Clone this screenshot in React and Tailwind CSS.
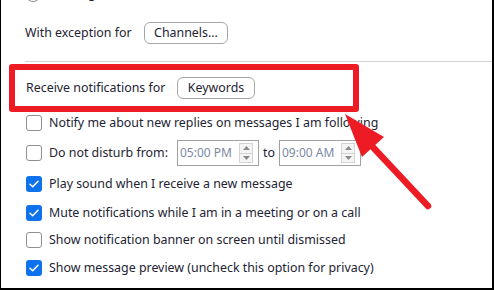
import React from 'react'

const rows = [
  { label: 'Notify me about new replies on messages I am following', checked: false, mt: 'mt-[3px]' },
  { label: 'Do not disturb from:', checked: false, mt: 'mt-[14px]', dnd: true },
  { label: 'Play sound when I receive a new message', checked: true, mt: 'mt-[15px]' },
  { label: 'Mute notifications while I am in a meeting or on a call', checked: true, mt: 'mt-[13px]' },
  { label: 'Show notification banner on screen until dismissed', checked: false, mt: 'mt-[11px]' },
  { label: 'Show message preview (uncheck this option for privacy)', checked: true, mt: 'mt-[12px]' },
]

function Checkbox({ checked }) {
  if (checked) {
    return (
      <span className="w-4 h-4 rounded-[3px] bg-[#0e72ed] flex items-center justify-center flex-shrink-0">
        <svg width="10" height="8" viewBox="0 0 10 8" fill="none">
          <path d="M1 4.2 3.7 6.8 9 1.2" stroke="#fff" strokeWidth="1.5" strokeLinecap="round" strokeLinejoin="round" />
        </svg>
      </span>
    )
  }
  return <span className="w-4 h-4 rounded-[3px] border border-[#8e8e93] bg-white flex-shrink-0" />
}

function TimeField({ value }) {
  return (
    <div className="h-[26px] border border-[#a0a0a0] bg-white flex items-center justify-between pl-[2px] pr-[5px]">
      <span className="text-[12px] text-[#7b8aa3]">{value}</span>
      {/* spinner */}
      <span className="w-[14px] h-[20px] border border-[#d4d4d4] bg-[#f4f4f4] flex flex-col">
        <span className="flex-1 flex items-center justify-center border-b border-[#d4d4d4]">
          <svg width="7" height="4" viewBox="0 0 7 4"><path d="M0 4 3.5 0 7 4z" fill="#8a8a8a" /></svg>
        </span>
        <span className="flex-1 flex items-center justify-center">
          <svg width="7" height="4" viewBox="0 0 7 4"><path d="M0 0 3.5 4 7 0z" fill="#8a8a8a" /></svg>
        </span>
      </span>
    </div>
  )
}

export default function App() {
  return (
    <div
      className="relative w-[494px] h-[290px] overflow-hidden bg-white border-l border-r-2 border-b-2 border-black text-[12.4px] text-[#232333]"
      style={{ fontFamily: '"Noto Sans", "Open Sans", sans-serif' }}
    >
      {/* clipped radio from above */}
      <div className="-mt-[14px] h-[16px] pl-[24px] flex items-center gap-[7px]">
        <span className="w-4 h-4 rounded-full border border-[#8e8e93]" />
        <span>Nothing</span>
      </div>

      {/* With exception for */}
      <div className="mt-[20px] h-[22px] pl-[24px] flex items-center">
        <span className="w-[119px]">With exception for</span>
        <button className="w-[84px] h-[22px] rounded-[6px] border border-[#a6a6a6] bg-white leading-none">
          Channels...
        </button>
      </div>

      <div className="mt-[17px] ml-[24px] h-px bg-[#d6d6d6]" />

      {/* highlighted row */}
      <div className="mt-[2px] ml-[8px] w-[350px] h-[48px] border-[6px] border-[#ed1c24] rounded-[3px] flex items-center pl-[11px]">
        <span className="w-[151px]">Receive notifications for</span>
        <button className="w-[78px] h-[22px] rounded-[6px] border border-[#a6a6a6] bg-white leading-none">
          Keywords
        </button>
      </div>

      {rows.map((r) => (
        <div key={r.label} className={`${r.mt} h-4 pl-[25px] flex items-center gap-[7px]`}>
          <Checkbox checked={r.checked} />
          <span className={r.dnd ? 'w-[128px] whitespace-nowrap' : 'whitespace-nowrap'}>{r.label}</span>
          {r.dnd && (
            <div className="flex items-center -ml-[7px]">
              <div className="w-[82px]"><TimeField value="05:00 PM" /></div>
              <span className="w-[20px] text-center">to</span>
              <div className="w-[82px]"><TimeField value="09:00 AM" /></div>
            </div>
          )}
        </div>
      ))}

      {/* annotation arrow */}
      <svg className="absolute left-0 top-0 pointer-events-none" width="494" height="290">
        <line x1="368" y1="143" x2="427" y2="206" stroke="#ed1c24" strokeWidth="6.5" strokeLinecap="round" />
        <polygon points="344,114 383,137 361,157" fill="#ed1c24" />
      </svg>
    </div>
  )
}
